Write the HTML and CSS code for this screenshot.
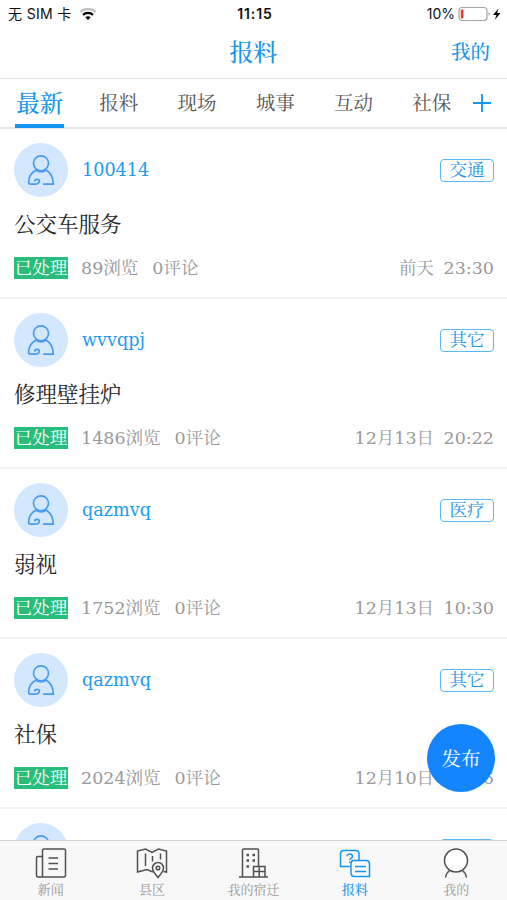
FILE: index.html
```html
<!DOCTYPE html>
<html lang="zh-CN">
<head>
    <meta charset="UTF-8">
    <meta name="viewport" content="width=device-width, initial-scale=1.0">
    <title>报料</title>
    <link rel="stylesheet" href="styles.css">
</head>
<body>
    <!-- Shared avatar drawing -->
    <svg class="defs" width="0" height="0">
        <symbol id="avatar" viewBox="0 0 54 54">
            <circle cx="27" cy="20.3" r="7.5"/>
            <path d="M22 27c3 2.600 7 2.600 10 0M22 27c-4.600 2.700-7.400 7.300-7.400 12.300 0 1.200.6 1.900 1.800 1.900h4.200c2.800 0 4.700-1.300 4.700-3.200 0-2.300-4.600-2.100-4.600.4M32 27c4.600 2.700 7.300 7.700 7.300 14.200H29"/>
        </symbol>
    </svg>

    <div class="phone">
        <div class="status-bar">
            <div class="carrier">
                <span>无 SIM 卡</span>
                <svg width="18" height="14" viewBox="0 0 18 14" fill="none" stroke-width="2.300">
                    <path d="M1.300 5C5.500 1 12.500 1 16.700 5" stroke="#c4c4c4"/>
                    <path d="M4 7.900c2.800-2.700 7.200-2.700 10 0" stroke="#000"/>
                    <path d="M9 13L6.300 10.300c1.500-1.400 3.900-1.400 5.400 0z" fill="#000"/>
                </svg>
            </div>
            <div class="clock">11:15</div>
            <div class="battery">
                <span>10%</span>
                <svg width="44" height="16" viewBox="0 0 44 16">
                    <rect x="1" y="1.500" width="28" height="13" rx="3" fill="#fff" stroke="#a3a3a3" stroke-width="1.200"/>
                    <rect x="2.800" y="3.500" width="2.600" height="9" rx="1" fill="#f8312f"/>
                    <path d="M30.600 6v4c1.600-.8 1.600-3.200 0-4z" fill="#a3a3a3"/>
                    <path d="M40.500 2.500L35 9h3.300l-1.300 4.800L42.500 7h-3.400z" fill="#000"/>
                </svg>
            </div>
        </div>

        <div class="header">
            <h1>报料</h1>
            <a class="mine">我的</a>
        </div>

        <div class="tabs">
            <div class="tab active"><span>最新</span></div>
            <div class="tab">报料</div>
            <div class="tab">现场</div>
            <div class="tab">城事</div>
            <div class="tab">互动</div>
            <div class="tab">社保</div>
            <svg class="add" width="18" height="18" viewBox="0 0 18 18"><path d="M9 0v18M0 9h18"/></svg>
        </div>

        <div class="list">
            <div class="item">
                <div class="item-top">
                    <svg class="avatar"><use href="#avatar"/></svg>
                    <span class="name">100414</span>
                    <span class="tag">交通</span>
                </div>
                <div class="title">公交车服务</div>
                <div class="meta">
                    <span class="state">已处理</span>
                    <span class="views">89浏览</span>
                    <span>0评论</span>
                    <span class="date">前天&nbsp; 23:30</span>
                </div>
            </div>

            <div class="item">
                <div class="item-top">
                    <svg class="avatar"><use href="#avatar"/></svg>
                    <span class="name">wvvqpj</span>
                    <span class="tag">其它</span>
                </div>
                <div class="title">修理壁挂炉</div>
                <div class="meta">
                    <span class="state">已处理</span>
                    <span class="views">1486浏览</span>
                    <span>0评论</span>
                    <span class="date">12月13日&nbsp; 20:22</span>
                </div>
            </div>

            <div class="item">
                <div class="item-top">
                    <svg class="avatar"><use href="#avatar"/></svg>
                    <span class="name">qazmvq</span>
                    <span class="tag">医疗</span>
                </div>
                <div class="title">弱视</div>
                <div class="meta">
                    <span class="state">已处理</span>
                    <span class="views">1752浏览</span>
                    <span>0评论</span>
                    <span class="date">12月13日&nbsp; 10:30</span>
                </div>
            </div>

            <div class="item">
                <div class="item-top">
                    <svg class="avatar"><use href="#avatar"/></svg>
                    <span class="name">qazmvq</span>
                    <span class="tag">其它</span>
                </div>
                <div class="title">社保</div>
                <div class="meta">
                    <span class="state">已处理</span>
                    <span class="views">2024浏览</span>
                    <span>0评论</span>
                    <span class="date">12月10日&nbsp; 10:56</span>
                </div>
            </div>

            <div class="item">
                <div class="item-top">
                    <svg class="avatar"><use href="#avatar"/></svg>
                    <span class="tag"></span>
                </div>
            </div>
        </div>

        <button class="publish">发布</button>

        <div class="tab-bar">
            <div class="nav">
                <svg viewBox="0 0 32 32">
                    <path d="M7.500 30V3.500c0-1 .5-1.500 1.500-1.500h20c1 0 1.500.5 1.500 1.500v25c0 1-.5 1.500-1.500 1.500H3.500c-1.200 0-2-.8-2-2V11c0-1 .5-1.500 1.500-1.500h4.500M13.500 11h9.500M13.500 16.500h9.500M13.500 22h9.500"/>
                </svg>
                <span>新闻</span>
            </div>
            <div class="nav">
                <svg viewBox="0 0 32 32">
                    <path d="M17 25l-6-2.500-9.500 2.500V4l8-2 6.500 3.500 6.500-3.500 8 2v21l-3-.5M9.500 6.500v12.500M16.500 9v5.500M24.500 6.500v6"/>
                    <path d="M22 30.500c-3.500-4-5.500-6.500-5.500-9.500a5.500 5.500 0 0 1 11 0c0 3-2 5.500-5.500 9.500z"/>
                    <circle cx="22" cy="21" r="1.800"/>
                </svg>
                <span>县区</span>
            </div>
            <div class="nav">
                <svg viewBox="0 0 32 32">
                    <path d="M1 30h29M4.500 30V3c0-.7.300-1 1-1h14c.7 0 1 .3 1 1v16M15.500 30V19.500h11.500V30M15.500 24.500h11.500M21.200 19.500v10.500"/>
                    <path class="windows" d="M8.500 8h2.500M14.500 8h2.500M8.500 13.500h2.500M14.500 13.500h2.500M8.500 19.500h2.500"/>
                </svg>
                <span>我的宿迁</span>
            </div>
            <div class="nav active">
                <svg viewBox="0 0 32 32">
                    <path d="M11.500 19.500H1.500V7c0-2.500 1-3.500 3.500-3.500h11.500c2.500 0 3.500 1 3.500 3.500v6"/>
                    <path d="M14.500 13.500H27c2.500 0 3.500 1 3.500 3.500v12.500H15.500c-2.500 0-3.500-1-3.500-3.500v-9c0-2.300.5-3.500 2.500-3.500zM16 19.500h11M16 24.500h11"/>
                    <path d="M8 9.300c0-3.300 5.500-3 5.500.2 0 2-2.700 1.600-2.700 3.500M10.800 14.500v1.500"/>
                </svg>
                <span>报料</span>
            </div>
            <div class="nav">
                <svg viewBox="0 0 32 32">
                    <circle class="face" cx="16" cy="13.500" r="11.500"/>
                    <path d="M9.500 23.500c-2 1.500-3.500 4-4 7M22.500 23.500c2 1.500 3.500 4 4 7"/>
                </svg>
                <span>我的</span>
            </div>
        </div>
    </div>
</body>
</html>
```

FILE: styles.css
```css
* {
    box-sizing: border-box;
}

body {
    margin: 0;
    background-color: #fff;
    font-family: "DejaVu Serif", "Noto Serif CJK SC", "Noto Sans CJK SC", serif;
    color: #333;
}

.defs {
    position: absolute;
}

.phone {
    position: relative;
    display: flex;
    flex-direction: column;
    height: 900px;
    overflow: hidden;
}

/* Status bar */
.status-bar {
    display: grid;
    grid-template-columns: 1fr auto 1fr;
    align-items: center;
    flex: none;
    height: 27px;
    padding: 0 5px 0 8px;
    font-family: Inter, "Noto Sans CJK SC", sans-serif;
    font-size: 14px;
    line-height: 27px;
    color: #111;
}

.carrier,
.battery {
    display: flex;
    align-items: center;
    gap: 7px;
}

.carrier {
    letter-spacing: 0.35px;
}

.clock {
    font-weight: 600;
    letter-spacing: 0.9px;
}

.battery {
    justify-content: flex-end;
    gap: 3px;
}

/* Header */
.header {
    display: grid;
    grid-template-columns: 1fr auto 1fr;
    align-items: center;
    flex: none;
    height: 52px;
    padding: 1px 17px 0;
    border-bottom: 1px solid #e2e2e2;
    color: #1296f0;
}

.header h1 {
    grid-column: 2;
    margin: 0;
    font-size: 24px;
    font-weight: 500;
    line-height: 50px;
}

.mine {
    justify-self: end;
    font-size: 19.5px;
    font-weight: 500;
    line-height: 50px;
}

/* Category tabs */
.tabs {
    display: flex;
    align-items: center;
    flex: none;
    height: 50px;
    border-bottom: 2px solid #e6e6e6;
}

.tab {
    display: flex;
    justify-content: center;
    align-items: center;
    width: 78.3px;
    height: 49px;
    font-size: 19.5px;
    line-height: 51px;
    color: #555;
}

.tab.active {
    width: 79.5px;
    font-size: 23.5px;
    font-weight: 500;
    color: #1296f0;
}

.tab.active span {
    width: 49px;
    height: 49px;
    text-align: center;
    border-bottom: 4px solid #1296f0;
}

.add {
    margin-left: 2px;
    fill: none;
    stroke: #1296f0;
    stroke-width: 1.8;
}

/* Posts */
.list {
    flex: 1;
    min-height: 0;
    overflow: hidden;
}

.item {
    height: 170px;
    padding: 14px 13px 0 14px;
    border-bottom: 2px solid #f3f3f3;
}

.item-top {
    display: flex;
    align-items: center;
}

.avatar {
    width: 54px;
    height: 54px;
    border-radius: 50%;
    background-color: #d3e7ff;
    fill: none;
    stroke: #489bf0;
    stroke-width: 1.7;
}

.name {
    margin-left: 14px;
    font-size: 17.6px;
    line-height: 54px;
    color: #1d9bf0;
}

.tag {
    width: 54px;
    height: 23px;
    margin-left: auto;
    border: 1px solid #5db8f7;
    border-radius: 4px;
    font-size: 17.5px;
    line-height: 21px;
    text-align: center;
    color: #1d93e8;
}

.title {
    height: 32px;
    margin-top: 12px;
    font-size: 21.5px;
    line-height: 32px;
    color: #262626;
}

.meta {
    display: flex;
    align-items: center;
    height: 22px;
    margin-top: 16px;
    font-size: 17.5px;
    line-height: 22px;
    color: #999;
}

.state {
    width: 54px;
    height: 22px;
    text-align: center;
    background-color: #29bd7d;
    color: #fff;
}

.views {
    margin: 0 14px 0 13px;
}

.date {
    margin-left: auto;
    word-spacing: -0.8px;
}

/* Floating button */
.publish {
    position: absolute;
    right: 12px;
    bottom: 108px;
    width: 68px;
    height: 68px;
    padding: 0;
    border: none;
    border-radius: 50%;
    background-color: #1485ff;
    font-family: inherit;
    font-size: 19.5px;
    color: #fff;
}

/* Bottom navigation */
.tab-bar {
    display: flex;
    flex: none;
    height: 60px;
    border-top: 1px solid #d2d2d2;
    background-color: #f8f8f8;
}

.nav {
    display: flex;
    flex: 1;
    flex-direction: column;
    align-items: center;
    padding-top: 6px;
    font-size: 13px;
    line-height: 20px;
    color: #999;
}

.nav svg {
    width: 32px;
    height: 32px;
    margin-bottom: 1px;
    fill: none;
    stroke: #505050;
    stroke-width: 1.5;
}

.nav .windows {
    stroke-width: 2.5;
}

.nav .face {
    fill: #fff;
}

.nav.active {
    font-weight: 500;
    color: #1296f0;
}

.nav.active svg {
    stroke: #1296f0;
}
```
